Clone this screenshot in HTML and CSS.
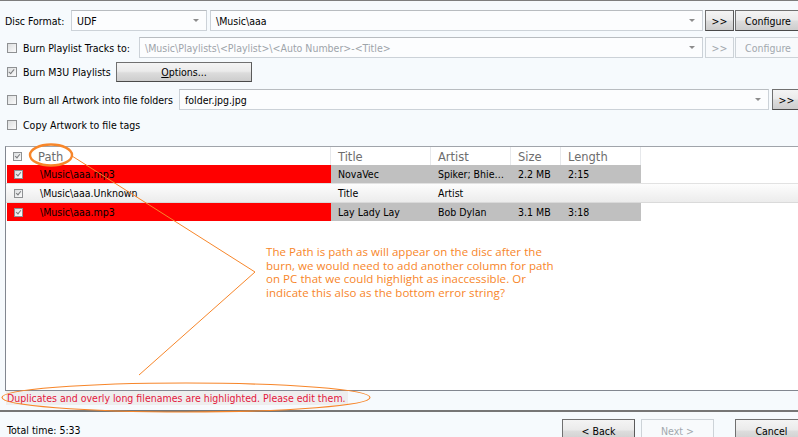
FILE: index.html
```html
<!DOCTYPE html>
<html lang="en">
<head>
    <meta charset="UTF-8">
    <title>Burn Options</title>
    <link rel="stylesheet" href="styles.css">
</head>
<body>
    <div class="dialog">
        <div class="options">
            <div class="opt-row row-format">
                <span class="label label-format">Disc Format:</span>
                <div class="combo combo-format"><span>UDF</span><i class="arrow"></i></div>
                <div class="combo combo-grow"><span>\Music\aaa</span><i class="arrow"></i></div>
                <button class="btn btn-more">&gt;&gt;</button>
                <button class="btn btn-config">Configure</button>
            </div>

            <div class="opt-row row-playlist">
                <span class="chk"></span>
                <span class="label label-playlist">Burn Playlist Tracks to:</span>
                <div class="combo combo-grow disabled"><span>\Music\Playlists\&lt;Playlist&gt;\&lt;Auto Number&gt;-&lt;Title&gt;</span><i class="arrow"></i></div>
                <button class="btn btn-more disabled">&gt;&gt;</button>
                <button class="btn btn-config disabled">Configure</button>
            </div>

            <div class="opt-row row-m3u">
                <span class="chk checked"></span>
                <span class="label label-m3u">Burn M3U Playlists</span>
                <button class="btn btn-options"><u>O</u>ptions...</button>
            </div>

            <div class="opt-row row-art">
                <span class="chk"></span>
                <span class="label label-art">Burn all Artwork into file folders</span>
                <div class="combo combo-grow"><span>folder.jpg.jpg</span><i class="arrow"></i></div>
                <button class="btn btn-more btn-more-art">&gt;&gt;</button>
            </div>

            <div class="opt-row row-tags">
                <span class="chk"></span>
                <span class="label">Copy Artwork to file tags</span>
            </div>
        </div>

        <div class="list">
            <div class="list-row list-head">
                <div class="cell cell-path"><span class="chk small checked"></span><span class="path-text">Path</span></div>
                <div class="cell">Title</div>
                <div class="cell">Artist</div>
                <div class="cell">Size</div>
                <div class="cell">Length</div>
                <div class="cell cell-rest"></div>
            </div>

            <div class="list-row flagged">
                <div class="cell cell-path"><span class="chk small checked"></span><span class="path-text">\Music\aaa.mp3</span></div>
                <div class="cell">NovaVec</div>
                <div class="cell">Spiker; Bhie…</div>
                <div class="cell">2.2 MB</div>
                <div class="cell">2:15</div>
                <div class="cell cell-rest"></div>
            </div>

            <div class="list-row plain">
                <div class="cell cell-path"><span class="chk small checked"></span><span class="path-text">\Music\aaa.Unknown</span></div>
                <div class="cell">Title</div>
                <div class="cell">Artist</div>
                <div class="cell"></div>
                <div class="cell"></div>
                <div class="cell cell-rest"></div>
            </div>

            <div class="list-row flagged">
                <div class="cell cell-path"><span class="chk small checked"></span><span class="path-text">\Music\aaa.mp3</span></div>
                <div class="cell">Lay Lady Lay</div>
                <div class="cell">Bob Dylan</div>
                <div class="cell">3.1 MB</div>
                <div class="cell">3:18</div>
                <div class="cell cell-rest"></div>
            </div>
        </div>

        <div class="status">
            <span class="status-text">Duplicates and overly long filenames are highlighted. Please edit them.</span>
        </div>

        <div class="footer">
            <span class="total">Total time: 5:33</span>
            <div class="nav">
                <button class="btn btn-nav">&lt; Back</button>
                <button class="btn btn-nav disabled">Next &gt;</button>
                <button class="btn btn-nav btn-cancel">Cancel</button>
            </div>
        </div>
    </div>

    <!-- review markup drawn over the dialog -->
    <svg class="markup" width="798" height="437" viewBox="0 0 798 437">
        <ellipse cx="51" cy="155" rx="21" ry="10.5" fill="none" stroke="#f7862a" stroke-width="2.4"/>
        <polyline points="72,156 255,272 139,375" fill="none" stroke="#f7862a" stroke-width="1"/>
        <ellipse cx="186" cy="397.5" rx="184" ry="14.5" fill="none" stroke="#f7862a" stroke-width="1.2"/>
    </svg>
    <p class="note">The Path is path as will appear on the disc after the burn, we would need to add another column for path on PC that we could highlight as inaccessible. Or indicate this also as the bottom error string?</p>
</body>
</html>
```

FILE: styles.css
```css
body {
    margin: 0;
    width: 798px;
    height: 437px;
    overflow: hidden;
    position: relative;
    background-color: #f6fafd;
    color: #000;
    font-family: "DejaVu Sans Condensed", "DejaVu Sans", Verdana, sans-serif;
    font-size: 10.5px;
}

.dialog {
    border-top: 1px solid #7d7d7d;
}

/* option rows */
.options {
    padding-left: 5px;
}

.opt-row {
    display: flex;
    align-items: center;
}

.row-format { height: 21px; margin-top: 9px; }
.row-playlist { height: 21px; margin-top: 6px; }
.row-m3u { height: 20px; margin-top: 4px; }
.row-art { height: 21px; margin-top: 7px; }
.row-tags { height: 18px; margin-top: 6px; }

.label {
    white-space: nowrap;
}

.label-format { width: 66px; }
.label-playlist { width: 116px; }
.label-m3u { width: 93px; }
.label-art { width: 156px; }

.chk {
    box-sizing: border-box;
    width: 10px;
    height: 10px;
    margin: 0 6px 0 2px;
    border: 1px solid #8f9193;
    background: linear-gradient(135deg, #dcdedf, #fbfbfb);
    position: relative;
    flex: none;
}

.chk.checked::after {
    content: "";
    position: absolute;
    left: 2px;
    top: 0px;
    width: 2px;
    height: 5px;
    border: solid #7a7c7e;
    border-width: 0 1.5px 1.5px 0;
    transform: rotate(40deg);
}

.chk.small {
    width: 9px;
    height: 9px;
    margin: 0;
    display: inline-block;
}

.chk.small::after {
    left: 2px;
    top: 0;
    height: 4px;
}

.combo {
    box-sizing: border-box;
    height: 21px;
    display: flex;
    align-items: center;
    padding: 0 5px;
    background: #fcfdfe;
    border: 1px solid #ccd2d8;
    border-top-color: #b8bcc0;
    position: relative;
    white-space: nowrap;
    overflow: hidden;
}

.combo.disabled {
    color: #9ea4aa;
}

.combo-format {
    width: 136px;
    margin-right: 3px;
}

.combo-grow {
    flex: 1;
}

.arrow {
    position: absolute;
    right: 7px;
    top: 8px;
    width: 0;
    height: 0;
    border-left: 3px solid transparent;
    border-right: 3px solid transparent;
    border-top: 3px solid #8c8c8c;
}

.btn {
    box-sizing: border-box;
    height: 21px;
    padding: 0;
    font-family: inherit;
    font-size: 10.5px;
    color: #000;
    border: 1px solid #707070;
    border-bottom-color: #4a4a4a;
    border-right-color: #5a5a5a;
    background: linear-gradient(#f4f4f4, #ebebeb 45%, #dcdcdc 55%, #cdcdcd);
    flex: none;
}

.btn.disabled {
    color: #a2a8ae;
    border-color: #cdd3d8;
    background: #f8fafc;
}

.btn-more {
    width: 29px;
    margin-left: 2px;
}

.btn-config {
    width: 66px;
    margin-left: 1px;
    margin-right: -3px;
}

.btn-more-art {
    margin-left: 3px;
    margin-right: -3px;
}

.btn-options {
    width: 136px;
    height: 20px;
}

/* file list */
.list {
    margin: 12px -4px 0 5px;
    height: 245px;
    box-sizing: border-box;
    border: 1px solid #828790;
    border-top-color: #a0a4aa;
    background: #fff;
}

.list-row {
    display: grid;
    grid-template-columns: 325px 100px 80px 50px 80px 1fr;
    height: 18px;
    align-items: center;
    white-space: nowrap;
}

.cell {
    height: 100%;
    display: flex;
    align-items: center;
    padding-left: 7px;
}

.cell-path {
    padding-left: 8px;
}

.path-text {
    margin-left: 17px;
}

.list-head {
    color: #6d6d6d;
    font-family: "DejaVu Sans", Verdana, sans-serif;
    font-size: 11.5px;
    background: #fff;
}

.list-head .cell {
    border-right: 1px solid #e6e8eb;
    align-items: flex-end;
    padding-bottom: 1px;
    box-sizing: border-box;
}

.list-head .cell-path {
    padding-left: 7px;
}

.list-head .chk {
    margin-bottom: 3px;
}

.list-head .path-text {
    margin-left: 16px;
}

.list-head .cell-rest {
    border-right: none;
}

.flagged .cell {
    background: #c0c0c0;
}

.flagged .cell-path {
    background: #ff0000;
    margin-left: 1px;
    padding-left: 7px;
}

.flagged .cell-rest {
    background: #fff;
}

.plain {
    background: linear-gradient(#fdfdfd, #ececec);
    border-top: 1px solid #e2e2e2;
    border-bottom: 1px solid #dadada;
    height: 18px;
}

/* status line and footer */
.status {
    height: 19px;
    padding-left: 6px;
    display: flex;
    align-items: flex-start;
}

.status-text {
    color: #e4173d;
    background: #eeeeee;
    padding: 1px 2px 1px 1px;
    line-height: 12px;
}

.footer {
    border-top: 2px solid #767676;
    display: flex;
    justify-content: space-between;
    padding: 7px 0 0 7px;
}

.total {
    margin-top: 5px;
}

.nav {
    display: flex;
    margin-right: -10px;
}

.btn-nav {
    width: 73px;
    height: 23px;
    margin-left: 6px;
}

.btn-cancel {
    margin-left: 21px;
}

/* review markup */
.markup {
    position: absolute;
    left: 0;
    top: 0;
    pointer-events: none;
}

.note {
    position: absolute;
    left: 266px;
    top: 245px;
    width: 292px;
    margin: 0;
    color: #f7862a;
    font-family: "Open Sans", sans-serif;
    font-size: 11.5px;
    letter-spacing: 0.05px;
    line-height: 13.7px;
}
```
